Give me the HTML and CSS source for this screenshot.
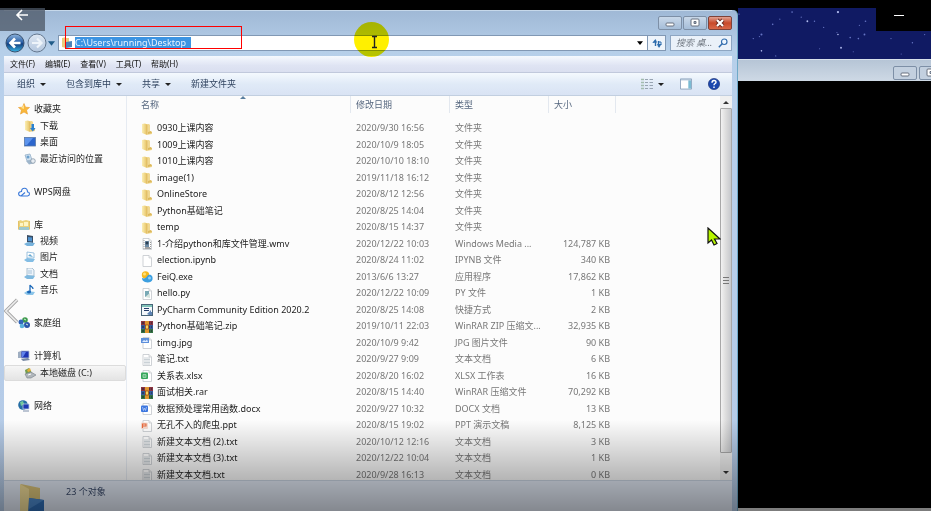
FILE: index.html
```html
<!DOCTYPE html>
<html lang="zh-CN">
<head>
<meta charset="utf-8">
<title>Desktop</title>
<link rel="stylesheet" href="styles.css">
</head>
<body>
<svg class="sprite" aria-hidden="true">
  <defs>
    <linearGradient id="gold" x1="0" x2="1"><stop offset="0" stop-color="#fbeeb4"/><stop offset="1" stop-color="#e6c263"/></linearGradient>
    <linearGradient id="ball" x1="0" y1="0" x2="0" y2="1"><stop offset="0" stop-color="#8fb4dd"/><stop offset=".45" stop-color="#2c62a8"/><stop offset=".55" stop-color="#123f80"/><stop offset="1" stop-color="#39b6e6"/></linearGradient>
    <linearGradient id="pale" x1="0" y1="0" x2="0" y2="1"><stop offset="0" stop-color="#dfe8f3"/><stop offset="1" stop-color="#b3c6de"/></linearGradient>
  </defs>
  <symbol id="folder" viewBox="0 0 12 12"><path d="M4 1h4l1 1v6l2 1v2l-5 1z" fill="#f0d892"/><path d="M1 1l3-.5 2 1V12L1 10z" fill="url(#gold)"/><path d="M6 2v9" stroke="#d9b45a" stroke-width=".6"/><path d="M7 9l3-1 1 2-4 1z" fill="#ddb95c"/></symbol>
  <symbol id="page" viewBox="0 0 12 12"><path d="M2 .5h6l2.500 2.500v8.500H2z" fill="#fff" stroke="#c3c7cb" stroke-width=".8"/><path d="M8 .5V3h2.500" fill="#eee" stroke="#c3c7cb" stroke-width=".7"/></symbol>
  <symbol id="txt" viewBox="0 0 12 12"><use href="#page"/><path d="M3 4h6M3 5.500h6M3 7h6M3 8.500h6M3 10h6" stroke="#bcc5cc" stroke-width=".8"/></symbol>
  <symbol id="video" viewBox="0 0 12 12"><use href="#page"/><path d="M3 2v9M9.500 4v7" stroke="#999" stroke-dasharray="1 1"/><path d="M4 3h4v6H4z" fill="#6d8ba5"/><circle cx="6" cy="5" r="1.500" fill="#2d4053"/><path d="M4 10h5" stroke="#444"/></symbol>
  <symbol id="feiq" viewBox="0 0 12 12"><circle cx="4.500" cy="4" r="3.700" fill="#f6b81f"/><circle cx="3.500" cy="3" r="1.500" fill="#ffe27a"/><path d="M1 7c3 1 4 0 6-3 4-1 5 2 4.500 4.500-.5 3-5 3.500-7.500 2.500C2 10 1 9 1 7z" fill="#3c9fe0"/><circle cx="8.500" cy="7" r="1.500" fill="#8dd0f8"/></symbol>
  <symbol id="py" viewBox="0 0 12 12"><use href="#page"/><rect x="4" y="3" width="4" height="6" fill="#78a9b5"/><path d="M4 9l5-4v5z" fill="#d5e3de"/></symbol>
  <symbol id="pycharm" viewBox="0 0 12 12"><rect x=".5" y=".5" width="11" height="11" fill="#f4f8fb" stroke="#496579"/><path d="M1 2h10" stroke="#58b0a0" stroke-width="1.500"/><path d="M3 4.500h5M3 6.500h5" stroke="#243b69" stroke-width="1.200"/><path d="M6 10l4-4v2h1v3H8z" fill="#5e83b4"/></symbol>
  <symbol id="rar" viewBox="0 0 12 12"><path d="M0 0h12v4H0z" fill="#8a3340"/><path d="M0 4h12v4H0z" fill="#355b9c"/><path d="M0 8h12v4H0z" fill="#347244"/><path d="M1 2h10M1 6h10M1 10h10" stroke="#1f2433" stroke-dasharray="2 1"/><path d="M4 0h4v12H4z" fill="#e0962f"/><rect x="4.500" y="4" width="3" height="4" fill="#f8d75e" stroke="#8b3d18" stroke-width=".7"/></symbol>
  <symbol id="jpg" viewBox="0 0 12 12"><use href="#page"/><path d="M0 1h8v5H0z" fill="#5d8fdb"/><path d="M1 5l2-2 1.500 1L6 2.500 7 5z" fill="#dceaff"/></symbol>
  <symbol id="xls" viewBox="0 0 12 12"><use href="#page"/><rect y="2.500" width="7" height="6.500" rx="1" fill="#35a65a"/><path d="M2 4.500h3v3H2zM2 6h3" fill="none" stroke="#a8dcb8" stroke-width=".8"/></symbol>
  <symbol id="doc" viewBox="0 0 12 12"><use href="#page"/><rect y="2.500" width="7" height="6.500" rx="1" fill="#3c76df"/><path d="M1.500 4l1 3.500 1-2.500 1 2.500 1-3.500" fill="none" stroke="#b5cdf8" stroke-width=".8"/></symbol>
  <symbol id="ppt" viewBox="0 0 12 12"><use href="#page"/><rect y="2.500" width="7" height="6.500" rx="1" fill="#f6ddd2"/><path d="M1.500 8V4h3.500v2H2" fill="none" stroke="#ea6a3d" stroke-width="1.100"/></symbol>
  <symbol id="star" viewBox="0 0 12 12"><path d="M6 .5l1.500 3.700 4 .3-3 2.600 1 4L6 9l-3.500 2.100 1-4-3-2.600 4-.3z" fill="#f9b83a" stroke="#ea9a28" stroke-width=".6"/><path d="M6 2v4L3 5z" fill="#ffe08a"/></symbol>
  <symbol id="download" viewBox="0 0 12 12"><use href="#folder"/><path d="M7.500 4h2.500v4h1.500L8.800 11.500 6 8h1.500z" fill="#2a82d2"/></symbol>
  <symbol id="desk" viewBox="0 0 12 12"><rect x=".5" y="1.500" width="11" height="8.500" fill="#2c66cd" stroke="#5b7ba7" stroke-width=".8"/><path d="M1 2h8L3 9H1z" fill="#5d94ec"/></symbol>
  <symbol id="recent" viewBox="0 0 12 12"><path d="M1 2l5-1 2 6-5 1z" fill="#cfe0ef" stroke="#8aa8c3" stroke-width=".7"/><circle cx="4" cy="4" r="1.500" fill="#6ba0cc"/><path d="M2 8l6-1 3 3-6 1.500z" fill="#9fb6cb"/><circle cx="9" cy="8" r="2.300" fill="#e7edf3" stroke="#7c8e9e" stroke-width=".7"/></symbol>
  <symbol id="cloud" viewBox="0 0 12 12"><path d="M3 10h6.500c2.700-.5 2.500-4 0-4C9.500 1 3.500 1 3.500 5.500-.3 5.500-.2 9.700 3 10l4-3.500" fill="none" stroke="#3978d9" stroke-width="1.100"/></symbol>
  <symbol id="library" viewBox="0 0 12 12"><path d="M0 2l3-1 1 1 4-1 4 1v8H0z" fill="#ecd27a"/><path d="M2 4h3v3H2zM6 3h4v4H6z" fill="#fff5c4"/><path d="M1 8h10v3H1z" fill="#9fc8cd"/><path d="M0 2v9M12 2v9" stroke="#d8b458"/></symbol>
  <symbol id="film" viewBox="0 0 12 12"><path d="M3 0l6 1v7l-6-1z" fill="#394d64"/><path d="M4 2l4 .5v4L4 6z" fill="#4e91cf"/><path d="M0 9l4-2 7 1-2 3H3z" fill="#76b2dc"/></symbol>
  <symbol id="photo" viewBox="0 0 12 12"><path d="M3 1l7 1v5L3 7z" fill="#fff" stroke="#83b2d7" stroke-width=".8"/><path d="M4 5l2-2 3 3z" fill="#66a8d2"/><path d="M0 9l3-2 8 1-2 3H3z" fill="#83bde4"/></symbol>
  <symbol id="docs" viewBox="0 0 12 12"><path d="M3 0h5l2 2v6H3z" fill="#edf4fa" stroke="#8ea9bf" stroke-width=".7"/><path d="M4 3h4M4 5h4" stroke="#8db0cc" stroke-width=".7"/><path d="M0 9l3-2 8 1-2 3H3z" fill="#7fb9df"/></symbol>
  <symbol id="music" viewBox="0 0 12 12"><path d="M0 9l3-2 8 1-2 3H3z" fill="#8cc5e9"/><path d="M6 8V1c1 2 3 2 3 4" fill="none" stroke="#1b68b8" stroke-width="1.300"/><ellipse cx="5" cy="8" rx="2" ry="1.500" fill="#1b68b8"/></symbol>
  <symbol id="home" viewBox="0 0 12 12"><circle cx="7" cy="3" r="2.800" fill="#3e9a4d"/><circle cx="3" cy="5" r="2.500" fill="#3166b8"/><circle cx="9" cy="8" r="3" fill="#2a55aa"/><circle cx="4" cy="9" r="2.300" fill="#59b1dc"/><path d="M6 2l2 1M8 7l2 1" stroke="#d5f1dc"/></symbol>
  <symbol id="pc" viewBox="0 0 12 12"><path d="M0 2l3-1v7H0z" fill="#9faec1"/><path d="M3 1h8v7H3z" fill="#1d35b3" stroke="#b1bed1" stroke-width=".8"/><path d="M4 2h4L5 7H4z" fill="#5f82ea"/><path d="M3 9l7-1 2 2-7 1z" fill="#788aa4"/></symbol>
  <symbol id="disk" viewBox="0 0 12 12"><path d="M1 3l4-2 3 5-6 2z" fill="#729d52"/><path d="M3 3l3-2 1 3-3 1z" fill="#e5ae36"/><path d="M1 7l6-2 5 3-5 3H3z" fill="#b0b6bb" stroke="#777f87" stroke-width=".6"/><path d="M4 8l3-1" stroke="#fff"/></symbol>
  <symbol id="net" viewBox="0 0 12 12"><circle cx="5" cy="5" r="4.800" fill="#246da4"/><path d="M2 2l3-1 1 3-3 2z" fill="#73c99c"/><path d="M5 4h6v5H5z" fill="#1c38b2" stroke="#b9cae0" stroke-width=".8"/><path d="M5 11h6" stroke="#7d8eaa"/></symbol>
  <symbol id="minimize" viewBox="0 0 12 12"><rect x="2" y="6" width="8" height="3" rx="1" fill="#fff" stroke="#68717f"/></symbol>
  <symbol id="maximize" viewBox="0 0 12 12"><rect x="2" y="2" width="8" height="7" rx="1" fill="#fff" stroke="#68717f"/><path d="M5 4.500h2v2H5z" fill="#a9bad0" stroke="#68717f"/></symbol>
</svg>

<main class="desktop">
  <section class="window" aria-label="Desktop">
    <header class="titlebar">
      <div class="controls">
        <button aria-label="最小化"><svg><use href="#minimize"/></svg></button>
        <button aria-label="最大化"><svg><use href="#maximize"/></svg></button>
        <button class="close" aria-label="关闭"><svg viewBox="0 0 12 12"><path d="M3 3l6 6M9 3L3 9" stroke="#6a2920" stroke-width="4"/><path d="M3 3l6 6M9 3L3 9" stroke="#fff" stroke-width="2.200"/></svg></button>
      </div>
    </header>
    <div class="location">
      <button class="nav" aria-label="后退"><svg viewBox="0 0 20 20"><circle cx="10" cy="10" r="9" fill="url(#ball)" stroke="#39516f"/><path d="M15.500 10H6M10 5.500L5.500 10l4.500 4.500" fill="none" stroke="#fff" stroke-width="2.600"/></svg></button>
      <button class="nav" aria-label="前进"><svg viewBox="0 0 20 20"><circle cx="10" cy="10" r="9" fill="url(#pale)" stroke="#65788f"/><path d="M5 10h9M10 5.500l4.500 4.500-4.500 4.500" fill="none" stroke="#eef4fa" stroke-width="2.200"/></svg></button>
      <button class="history" aria-label="最近的位置"><svg viewBox="0 0 8 5"><path d="M0 0h8L4 5z" fill="#205b88"/></svg></button>
      <div class="address">
        <svg class="icon" viewBox="0 0 12 12"><path d="M1 1l4-1v11l-4-1zM5 1h3v9H5z" fill="#e9ce7d"/><path d="M5 5l6-1v6l-6 1z" fill="#4d83b7"/></svg>
        <input class="path" aria-label="地址" value="C:\Users\running\Desktop">
        <button class="drop" aria-label="展开"><svg viewBox="0 0 8 5"><path d="M0 0h8L4 5z"/></svg></button>
        <button class="refresh" aria-label="刷新"><svg viewBox="0 0 12 12"><path d="M4.500 9V3.500M7.500 4v5.500" stroke="#2c6cad" stroke-width="1.400"/><path d="M1.500 5.500l3-3.500v3.500zM1.500 6l3-4 1.500 3.500zM10.500 7L8 11 6 7z" fill="#2c6cad"/><path d="M7.500 5h2.500v3" fill="none" stroke="#2c6cad"/></svg></button>
      </div>
      <label class="search"><input aria-label="搜索" placeholder="搜索 桌..."><svg viewBox="0 0 12 12"><circle cx="7.500" cy="4.500" r="3.300" fill="#eef7ff" stroke="#326dae" stroke-width="1.400"/><path d="M5 7l-4 4" stroke="#326dae" stroke-width="1.800"/></svg></label>
    </div>
    <nav class="menu"><button>文件(F)</button><button>编辑(E)</button><button>查看(V)</button><button>工具(T)</button><button>帮助(H)</button></nav>
    <div class="toolbar">
      <button>组织<i></i></button><button>包含到库中<i></i></button><button>共享<i></i></button><button>新建文件夹</button>
      <div class="views">
        <button aria-label="视图"><svg class="view" viewBox="0 0 12 12"><path d="M0 1.500h3M0 4.500h3M0 7.500h3M0 10.500h3" stroke="#a3bcae" stroke-width="1.500"/><path d="M4 1.500h3M8.500 1.500H12M4 4.500h3M8.500 4.500H12M4 7.500h3M8.500 7.500H12M4 10.500h3M8.500 10.500H12" stroke="#98a4b2"/></svg><i></i></button>
        <button aria-label="预览窗格"><svg viewBox="0 0 13 12"><path d="M.5.5h12v11H.5z" fill="#fff" stroke="#8aa2bc"/><path d="M9 2h3v9H9z" fill="#7bbbd3"/><path d="M1 1.500h11" stroke="#9bb4cc"/></svg></button>
        <button aria-label="帮助"><svg viewBox="0 0 12 12"><circle cx="6" cy="6" r="5.600" fill="#1c48ae" stroke="#14296d" stroke-width=".6"/><path d="M4 4.800c0-3 4-3 4-.6C8 5.600 6 5.500 6 7.300M6 8.500V10" fill="none" stroke="#fff" stroke-width="1.400"/></svg></button>
      </div>
    </div>
    <div class="content">
      <nav class="tree">
        <ul class="favorites"><li class="top"><svg><use href="#star"/></svg>收藏夹</li><li><svg><use href="#download"/></svg>下载</li><li><svg><use href="#desk"/></svg>桌面</li><li><svg><use href="#recent"/></svg>最近访问的位置</li></ul>
        <ul class="single"><li class="top"><svg><use href="#cloud"/></svg>WPS网盘</li></ul>
        <ul class="libraries"><li class="top"><svg><use href="#library"/></svg>库</li><li><svg><use href="#film"/></svg>视频</li><li><svg><use href="#photo"/></svg>图片</li><li><svg><use href="#docs"/></svg>文档</li><li><svg><use href="#music"/></svg>音乐</li></ul>
        <ul class="single"><li class="top"><svg><use href="#home"/></svg>家庭组</li></ul>
        <ul class="computer"><li class="top"><svg><use href="#pc"/></svg>计算机</li><li class="selected"><svg><use href="#disk"/></svg>本地磁盘 (C:)</li></ul>
        <ul class="last"><li class="top"><svg><use href="#net"/></svg>网络</li></ul>
      </nav>
      <div class="files">
        <table>
          <colgroup><col class="c-name"><col class="c-date"><col class="c-type"><col class="c-size"></colgroup>
          <thead><tr><th><span>名称<svg class="sort" viewBox="0 0 6 3"><path d="M0 3l3-3 3 3z" fill="#5a7f9f"/></svg></span></th><th><span>修改日期</span></th><th><span>类型</span></th><th><span>大小</span></th></tr></thead>
          <tbody>
            <tr><td><svg><use href="#folder"/></svg>0930上课内容</td><td>2020/9/30 16:56</td><td>文件夹</td><td></td></tr>
            <tr><td><svg><use href="#folder"/></svg>1009上课内容</td><td>2020/10/9 18:05</td><td>文件夹</td><td></td></tr>
            <tr><td><svg><use href="#folder"/></svg>1010上课内容</td><td>2020/10/10 18:10</td><td>文件夹</td><td></td></tr>
            <tr><td><svg><use href="#folder"/></svg>image(1)</td><td>2019/11/18 16:12</td><td>文件夹</td><td></td></tr>
            <tr><td><svg><use href="#folder"/></svg>OnlineStore</td><td>2020/8/12 12:56</td><td>文件夹</td><td></td></tr>
            <tr><td><svg><use href="#folder"/></svg>Python基础笔记</td><td>2020/8/25 14:04</td><td>文件夹</td><td></td></tr>
            <tr><td><svg><use href="#folder"/></svg>temp</td><td>2020/8/15 14:37</td><td>文件夹</td><td></td></tr>
            <tr><td><svg><use href="#video"/></svg>1-介绍python和库文件管理.wmv</td><td>2020/12/22 10:03</td><td>Windows Media ...</td><td>124,787 KB</td></tr>
            <tr><td><svg><use href="#page"/></svg>election.ipynb</td><td>2020/8/24 11:02</td><td>IPYNB 文件</td><td>340 KB</td></tr>
            <tr><td><svg><use href="#feiq"/></svg>FeiQ.exe</td><td>2013/6/6 13:27</td><td>应用程序</td><td>17,862 KB</td></tr>
            <tr><td><svg><use href="#py"/></svg>hello.py</td><td>2020/12/22 10:09</td><td>PY 文件</td><td>1 KB</td></tr>
            <tr><td><svg><use href="#pycharm"/></svg>PyCharm Community Edition 2020.2</td><td>2020/8/25 14:08</td><td>快捷方式</td><td>2 KB</td></tr>
            <tr><td><svg><use href="#rar"/></svg>Python基础笔记.zip</td><td>2019/10/11 22:03</td><td>WinRAR ZIP 压缩文...</td><td>32,935 KB</td></tr>
            <tr><td><svg><use href="#jpg"/></svg>timg.jpg</td><td>2020/10/9 9:42</td><td>JPG 图片文件</td><td>90 KB</td></tr>
            <tr><td><svg><use href="#txt"/></svg>笔记.txt</td><td>2020/9/27 9:09</td><td>文本文档</td><td>6 KB</td></tr>
            <tr><td><svg><use href="#xls"/></svg>关系表.xlsx</td><td>2020/8/20 16:02</td><td>XLSX 工作表</td><td>16 KB</td></tr>
            <tr><td><svg><use href="#rar"/></svg>面试相关.rar</td><td>2020/8/15 14:40</td><td>WinRAR 压缩文件</td><td>70,292 KB</td></tr>
            <tr><td><svg><use href="#doc"/></svg>数据预处理常用函数.docx</td><td>2020/9/27 10:32</td><td>DOCX 文档</td><td>13 KB</td></tr>
            <tr><td><svg><use href="#ppt"/></svg>无孔不入的爬虫.ppt</td><td>2020/8/15 19:02</td><td>PPT 演示文稿</td><td>8,125 KB</td></tr>
            <tr><td><svg><use href="#txt"/></svg>新建文本文档 (2).txt</td><td>2020/10/12 12:16</td><td>文本文档</td><td>3 KB</td></tr>
            <tr><td><svg><use href="#txt"/></svg>新建文本文档 (3).txt</td><td>2020/12/22 10:04</td><td>文本文档</td><td>1 KB</td></tr>
            <tr><td><svg><use href="#txt"/></svg>新建文本文档.txt</td><td>2020/9/28 16:13</td><td>文本文档</td><td>0 KB</td></tr>
          </tbody>
        </table>
      </div>
      <div class="scrollbar"><i class="up"></i><div class="thumb"><b></b></div><i class="down"></i></div>
    </div>
    <footer class="status">
      <svg viewBox="0 0 27 30"><path d="M2 0l19 4v26H7z" fill="#dcc57a"/><path d="M1 0l9 5v25H1z" fill="#f1dd98"/><path d="M10 14l15 2v14H9z" fill="#2f6db5"/><path d="M10 14l15 2-15 9z" fill="#4b88cb"/></svg>
      <span>23 个对象</span>
    </footer>
  </section>

  <section class="behind">
    <svg class="sky" viewBox="0 0 193 50" preserveAspectRatio="xMinYMin slice" aria-hidden="true">
      <g fill="#6675c4"><circle cx="1" cy="6" r=".7"/><circle cx="34" cy="16" r=".8"/><circle cx="41" cy="11" r=".6"/><circle cx="53" cy="4" r=".8"/><circle cx="15" cy="30" r=".7"/><circle cx="23" cy="26" r="1"/><circle cx="21" cy="28" r=".6"/><circle cx="62" cy="9" r=".6"/><circle cx="75" cy="13" r=".7"/><circle cx="84" cy="19" r=".6"/><circle cx="110" cy="29" r=".8"/><circle cx="118" cy="30" r=".8"/><circle cx="124" cy="26" r=".9"/><circle cx="119" cy="17" r=".6"/><circle cx="125" cy="13" r=".8"/><circle cx="37" cy="47" r=".6"/><circle cx="80" cy="40" r=".5"/><circle cx="113" cy="43" r=".5"/><circle cx="150" cy="30" r=".6"/><circle cx="171" cy="34" r=".7"/><circle cx="183" cy="26" r=".6"/><circle cx="191" cy="42" r=".8"/><circle cx="160" cy="45" r=".5"/><circle cx="97" cy="24" r=".5"/></g>
      <g fill="#b3bdf0"><circle cx="23" cy="42" r=".8"/><circle cx="68" cy="13" r=".9"/><circle cx="98" cy="4" r="1.100"/><circle cx="101" cy="39" r=".9"/><circle cx="98" cy="26" r=".8"/></g>
    </svg>
    <header class="backbar"><div class="controls"><button aria-label="最小化"><svg><use href="#minimize"/></svg></button><button aria-label="最大化"><svg><use href="#maximize"/></svg></button></div></header>
  </section>
</main>

<div class="shade"></div>
<div class="marker"></div>
<div class="spot"></div>
<svg class="caret" viewBox="0 0 7 14" aria-hidden="true"><path d="M1 1.500h5M1 12.500h5M3.500 1v12" stroke="#222" stroke-width="1.400"/></svg>
<svg class="pointer" viewBox="0 0 14 19" aria-hidden="true"><path d="M1 1v15l3.500-3 2.500 5 3-1.500-2.500-4.500H13z" fill="#b6f500" stroke="#111" stroke-width="1.200"/></svg>
<button class="back" aria-label="返回"><svg viewBox="0 0 14 12"><path d="M13 6H2M7 1L2 6l5 5" fill="none" stroke="#fff" stroke-width="1.600"/></svg></button>
<button class="mini" aria-label="最小化"></button>
<button class="previous" aria-label="上一张"><svg viewBox="0 0 16 28"><path d="M14 2L2 14l12 12" fill="none" stroke="#a5a5a5" stroke-width="3.500"/><path d="M14 2L2 14l12 12" fill="none" stroke="#ececec" stroke-width="1.800"/></svg></button>
</body>
</html>
```
FILE: styles.css
```css
* { box-sizing: border-box; }
body {
  margin: 0;
  height: 100vh;
  overflow: hidden;
  background: #000;
  color: #222;
  font: 9px/16px "Noto Sans", "Noto Sans CJK SC", sans-serif;
}
button, input { font: inherit; color: inherit; border: 0; padding: 0; margin: 0; background: none; }
svg { display: block; width: 12px; height: 12px; flex: none; }
ul { margin: 0; padding: 0; list-style: none; }
.sprite { position: absolute; width: 0; height: 0; }

.desktop { height: 100vh; padding-top: 8px; display: grid; grid-template-columns: 738fr 193fr; }
.window {
  display: flex;
  flex-direction: column;
  min-width: 0;
  min-height: 0;
  margin-top: 2px;
  padding: 0 5px 0 4px;
  border-right: 1px solid #6fa9c8;
  border-radius: 0 5px 0 0;
  background: linear-gradient(#9fb8d5, #b6cfe9 40px, #b9d0ec 100px, #b4cae6);
}
.titlebar { height: 22px; padding-top: 5px; border-top: 1px solid #c6d8ea; }
.controls { display: flex; justify-content: flex-end; gap: 1px; }
.controls button {
  display: flex; align-items: center; justify-content: center;
  width: 24px; height: 14px;
  border: 1px solid #7d8fa6; border-radius: 2px;
  background: linear-gradient(#c9d8e9, #a5bdd8);
}
.controls .close { background: linear-gradient(#e0a294, #c94a2b 50%, #d9694a); border-color: #7f4239; }
.location { height: 24px; padding-bottom: 2px; display: flex; align-items: center; }
.nav svg { width: 20px; height: 20px; }
.nav { margin-left: 1px; margin-right: 1px; }
.history { margin: 0 3px 0 0; }
.history svg { width: 7px; height: 5px; }
.address { flex: 1; height: 16px; display: flex; align-items: center; background: #fff; border: 1px solid #8198b4; }
.address .icon { margin: 0 2px; }
.path { width: 116px; height: 12px; color: #e8f4ff; background: #3c94e2; line-height: 12px; }
.drop { margin-left: auto; width: 14px; }
.drop svg { width: 6px; height: 4px; margin: auto; }
.refresh { width: 18px; height: 14px; border-left: 1px solid #8198b4; background: #eef4fb; }
.refresh svg { margin: auto; }
.search { width: 62px; height: 16px; margin-left: 4px; padding: 0 3px 0 5px; display: flex; align-items: center; border: 1px solid #8ea6c2; background: #eaf1f9; }
.search input { flex: 1; min-width: 0; font-style: italic; }
.search input::placeholder { color: #6f7781; opacity: 1; }
.search svg { width: 10px; height: 10px; }

.menu { height: 16px; display: flex; gap: 10px; padding-left: 6px; background: linear-gradient(#f5f9fe, #dfe4f3 60%, #dadff0); font-size: 8px; color: #111; }
.toolbar { height: 24px; display: flex; align-items: center; gap: 20px; padding: 0 12px 0 13px; border-bottom: 1px solid #c2cfe0; border-top: 1px solid #c1c9dc; background: linear-gradient(#f4f9fe, #e0eaf7 50%, #d9e3f4); color: #30435f; }
.toolbar button { display: flex; align-items: center; gap: 5px; }
.toolbar i { border: 3px solid transparent; border-top: 3px solid #222; border-bottom: 0; }
.views { display: flex; gap: 16px; margin-left: auto; }

.content { flex: 1; min-height: 0; display: flex; background: #fcfcfc; }
.tree { width: 122px; height: 313px; margin-top: 5px; display: grid; grid-template-rows: repeat(19, 1fr); flex: none; }
.tree ul { display: grid; grid-template-rows: subgrid; grid-row: span 2; }
.tree .favorites { grid-row: span 5; }
.tree .libraries { grid-row: span 6; }
.tree .computer { grid-row: span 3; }
.tree .last { grid-row: span 1; }
.tree li { display: flex; align-items: center; gap: 4px; padding-left: 20px; line-height: 16px; min-height: 0; }
.tree .top { padding-left: 14px; }
.tree .selected { border: 1px solid #dcdcdc; border-radius: 2px; background: linear-gradient(#f6f6f6, #e4e4e4); padding-left: 19px; }

.files { flex: 1; min-width: 0; overflow: hidden; border-left: 1px solid #e6ebf2; }
table { table-layout: fixed; width: 489px; height: 387px; border-collapse: collapse; color: #777; }
.c-name { width: 224px; }
.c-date, .c-type { width: 99px; }
.c-size { width: 67px; }
th { height: 24px; padding: 0; vertical-align: top; text-align: left; font-weight: 400; color: #56677f; }
th span { display: block; height: 17px; line-height: 18px; padding-left: 5px; border-right: 1px solid #e3e8ef; }
th:first-child span { position: relative; padding-left: 14px; }
.sort { position: absolute; top: 0; left: 113px; width: 6px; height: 3px; }
td { padding: 0 0 0 5px; white-space: nowrap; line-height: 16px; }
td:first-child { padding-left: 14px; color: #222; }
td svg { display: inline-block; vertical-align: middle; margin-right: 4px; }
td:last-child { text-align: right; padding: 0 6px 0 0; }

.scrollbar { width: 12px; display: flex; flex-direction: column; align-items: center; background: #f0f0f0; }
.up, .down { width: 0; border: 3px solid transparent; }
.up { border-bottom-color: #333; border-top: 0; margin: 5px 0 4px; }
.down { border-top-color: #333; border-bottom: 0; margin: 18px 0 6px; }
.thumb { flex: 1; width: 12px; display: flex; align-items: center; justify-content: center; border: 1px solid #a8a8a8; border-radius: 1px; background: linear-gradient(90deg, #f2f2f2, #dcdcdc 50%, #c6c8cc); }
.thumb b { width: 6px; height: 7px; border: solid #777; border-width: 1px 0; background: linear-gradient(transparent 2px, #777 2px, #777 3px, transparent 3px); }
.status { height: 31px; display: flex; align-items: flex-start; gap: 20px; padding: 3px 0 0 15px; overflow: hidden; border-top: 1px solid #c9d4e2; background: #e4ebf7; color: #394a6b; }
.status svg { width: 27px; height: 30px; }

.behind { display: flex; flex-direction: column; min-width: 0; border-bottom: 3px solid #d5d5d5; }
.sky { width: 100%; height: 51px; background: #101a63; }
.backbar { height: 22px; padding-top: 6px; border-top: 1px solid #d7e0ea; background: linear-gradient(#b6c5d6, #ced9e5); overflow: hidden; }
.backbar .controls { margin-right: -12px; gap: 2px; }
.backbar button { background: #c3d0df; }

.shade { position: absolute; inset: auto 0 0 0; height: 91px; background: linear-gradient(transparent, rgba(0, 0, 0, .26) 60%, rgba(0, 0, 0, .42)); pointer-events: none; }
.marker { position: absolute; left: 65px; top: 26px; width: 177px; height: 23px; border: 1px solid #f00; }
.spot { position: absolute; left: 354px; top: 22px; width: 35px; height: 35px; border-radius: 50%; background: #fff000; mix-blend-mode: multiply; }
.caret { position: absolute; left: 371px; top: 35px; width: 7px; height: 14px; }
.pointer { position: absolute; left: 707px; top: 227px; width: 14px; height: 19px; }
.back { position: absolute; left: 0; top: 8px; width: 45px; height: 23px; padding: 0 2px 10px 0; background: rgba(75, 85, 100, .75); }
.back svg { width: 14px; height: 12px; margin: auto; }
.mini { position: absolute; right: 0; top: 0; width: 55px; height: 31px; background: linear-gradient(#fff, #fff) 18px 15px / 10px 1px no-repeat #000; }
.previous { position: absolute; left: 4px; top: 297px; }
.previous svg { width: 15px; height: 28px; }
```
